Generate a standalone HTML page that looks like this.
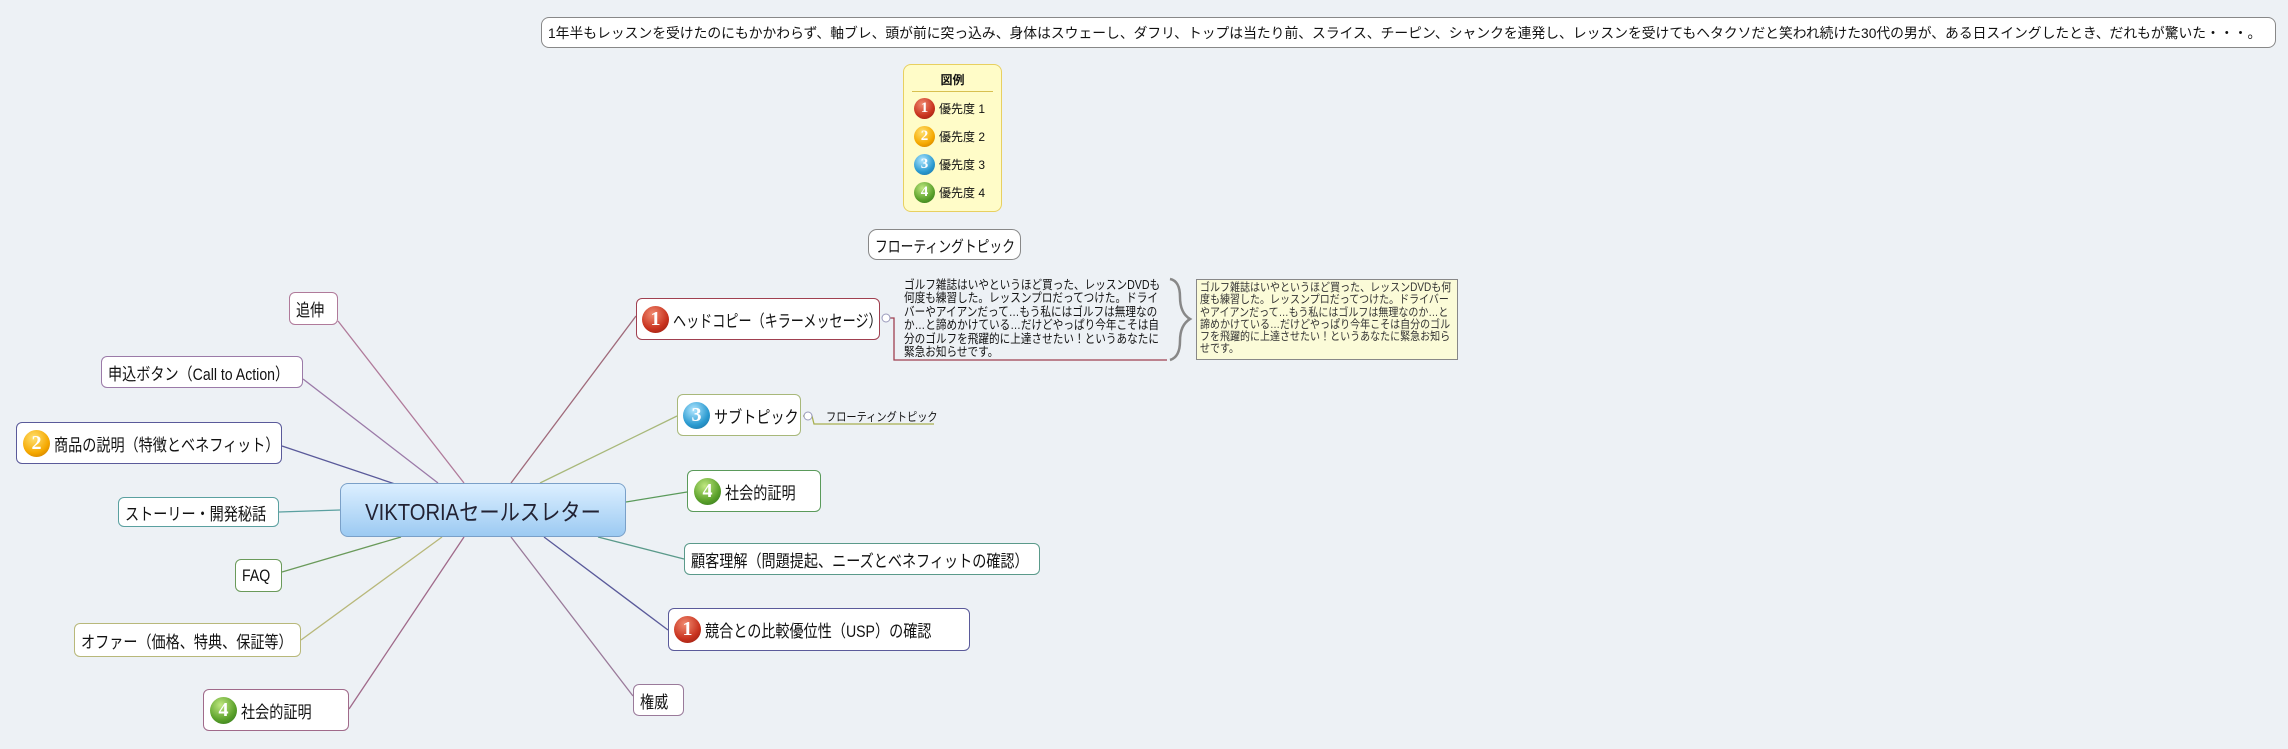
<!DOCTYPE html>
<html><head><meta charset="utf-8"><style>
*{margin:0;padding:0;box-sizing:border-box}
body{width:2288px;height:749px;overflow:hidden;background:#edf1f5;font-family:"Liberation Sans","Noto Sans CJK JP",sans-serif;color:#111;position:relative}
.n{position:absolute;background:#fff;border:1.5px solid #999;border-radius:6px;display:flex;align-items:center;font-size:17px;padding:0 6px;white-space:nowrap}
.t{display:inline-block;transform:scaleX(.83);transform-origin:left center}
.ic{width:27px;height:27px;border-radius:50%;color:#fff;font-weight:bold;font-size:20px;display:flex;align-items:center;justify-content:center;margin-right:4px;flex:none;font-family:"Liberation Serif",serif}
.r{background:radial-gradient(circle at 40% 30%,#f08a70,#c8321e 60%,#8a1a10)}
.o{background:radial-gradient(circle at 40% 30%,#ffe070,#f5a800 60%,#c07000)}
.b{background:radial-gradient(circle at 40% 30%,#b0e6ff,#2a9ad0 60%,#1a6a9a)}
.g{background:radial-gradient(circle at 40% 30%,#c0e880,#5aa02a 60%,#2a701a)}
.lg .ic{width:21px;height:21px;font-size:15px}
</style></head><body>
<svg width="2288" height="749" style="position:absolute;left:0;top:0">
<g stroke-width="1.3" fill="none">
<line x1="338" y1="321" x2="464" y2="483" stroke="#b07a9a"/>
<line x1="303" y1="379" x2="438" y2="483" stroke="#9b7aa8"/>
<line x1="282" y1="446" x2="404" y2="487" stroke="#5a5a9a"/>
<line x1="279" y1="512" x2="340" y2="510" stroke="#5aa0a0"/>
<line x1="282" y1="572" x2="401" y2="537" stroke="#6a9a5a"/>
<line x1="301" y1="640" x2="442" y2="537" stroke="#b8b87a"/>
<line x1="349" y1="709" x2="464" y2="537" stroke="#a06a8a"/>
<line x1="636" y1="316" x2="511" y2="483" stroke="#a06a7a"/>
<line x1="677" y1="416" x2="540" y2="483" stroke="#a8b87a"/>
<line x1="687" y1="492" x2="626" y2="502" stroke="#5a9a5a"/>
<line x1="684" y1="559" x2="598" y2="537" stroke="#5a9a8a"/>
<line x1="668" y1="630" x2="544" y2="537" stroke="#5a5a9a"/>
<line x1="633" y1="696" x2="511" y2="537" stroke="#9a7a9a"/>
<path d="M882 318 L894 318 L894 360 L1167 360" stroke="#a04050"/>
<path d="M803 416 L812 416 L814 424 L934 424" stroke="#a8b050"/>
<path d="M1170 279 q10 2 10 18 t10 22 q-10 6 -10 22 t-10 19" stroke="#888" stroke-width="2.5"/>
</g>
<circle cx="886" cy="318" r="4" fill="#fff" stroke="#99b"/>
<circle cx="808" cy="416" r="4" fill="#fff" stroke="#99b"/>
</svg>

<div class="n" style="left:541px;top:17px;width:1735px;height:31px;font-size:14px;border-color:#888;border-radius:8px"><span class="t" style="transform:scaleX(.985)">1年半もレッスンを受けたのにもかかわらず、軸ブレ、頭が前に突っ込み、身体はスウェーし、ダフリ、トップは当たり前、スライス、チーピン、シャンクを連発し、レッスンを受けてもヘタクソだと笑われ続けた30代の男が、ある日スイングしたとき、だれもが驚いた・・・。</span></div>

<div class="lg" style="position:absolute;left:903px;top:64px;width:99px;height:148px;background:#fffcc8;border:1.5px solid #e8d060;border-radius:8px;font-size:12px">
<div style="text-align:center;font-weight:bold;margin:6px 8px 0;border-bottom:1px solid #d8c050;padding-bottom:3px">図例</div>
<div style="display:flex;align-items:center;margin:6px 0 0 10px"><span class="ic r">1</span>優先度 1</div>
<div style="display:flex;align-items:center;margin:7px 0 0 10px"><span class="ic o">2</span>優先度 2</div>
<div style="display:flex;align-items:center;margin:7px 0 0 10px"><span class="ic b">3</span>優先度 3</div>
<div style="display:flex;align-items:center;margin:7px 0 0 10px"><span class="ic g">4</span>優先度 4</div>
</div>

<div class="n" style="left:868px;top:229px;width:153px;height:31px;font-size:16px;border-radius:9px;border-color:#888"><span class="t" style="transform:scaleX(.8)">フローティングトピック</span></div>

<div class="n" style="left:340px;top:483px;width:286px;height:54px;justify-content:center;font-size:23px;background:linear-gradient(#dcefff,#9ccaf2);border-color:#7aa0c8;border-radius:8px;color:#223"><span class="t" style="transform:scaleX(.88);transform-origin:center">VIKTORIAセールスレター</span></div>

<div class="n" style="left:289px;top:292px;width:49px;height:33px;border-color:#b07a9a"><span class="t">追伸</span></div>
<div class="n" style="left:101px;top:356px;width:202px;height:32px;border-color:#9b7aa8"><span class="t">申込ボタン（Call to Action）</span></div>
<div class="n" style="left:16px;top:422px;width:266px;height:42px;border-color:#5a5a9a;padding-left:6px"><span class="ic o">2</span><span class="t">商品の説明（特徴とベネフィット）</span></div>
<div class="n" style="left:118px;top:497px;width:161px;height:30px;border-color:#5aa0a0"><span class="t">ストーリー・開発秘話</span></div>
<div class="n" style="left:235px;top:559px;width:47px;height:33px;border-color:#6a9a5a"><span class="t">FAQ</span></div>
<div class="n" style="left:74px;top:623px;width:227px;height:34px;border-color:#b8b87a"><span class="t">オファー（価格、特典、保証等）</span></div>
<div class="n" style="left:203px;top:689px;width:146px;height:42px;border-color:#a06a8a"><span class="ic g">4</span><span class="t">社会的証明</span></div>

<div class="n" style="left:636px;top:298px;width:244px;height:42px;border-color:#a04050;padding-left:5px"><span class="ic r">1</span><span class="t" style="transform:scaleX(.77)">ヘッドコピー（キラーメッセージ）</span></div>
<div style="position:absolute;left:904px;top:279px;width:310px;font-size:12.5px;line-height:13.4px;transform:scaleX(.85);transform-origin:left top">ゴルフ雑誌はいやというほど買った、レッスンDVDも何度も練習した。レッスンプロだってつけた。ドライバーやアイアンだって…もう私にはゴルフは無理なのか…と諦めかけている…だけどやっぱり今年こそは自分のゴルフを飛躍的に上達させたい！というあなたに緊急お知らせです。</div>
<div style="position:absolute;left:1196px;top:279px;width:262px;height:81px;background:#fbfbd8;border:1.5px solid #888;"></div>
<div style="position:absolute;left:1200px;top:282px;width:290px;font-size:11.5px;line-height:12.3px;color:#333;transform:scaleX(.87);transform-origin:left top">ゴルフ雑誌はいやというほど買った、レッスンDVDも何度も練習した。レッスンプロだってつけた。ドライバーやアイアンだって…もう私にはゴルフは無理なのか…と諦めかけている…だけどやっぱり今年こそは自分のゴルフを飛躍的に上達させたい！というあなたに緊急お知らせです。</div>

<div class="n" style="left:677px;top:394px;width:124px;height:42px;border-color:#a8b87a;padding-left:5px"><span class="ic b">3</span><span class="t">サブトピック</span></div>
<div style="position:absolute;left:826px;top:408px;font-size:12px;transform:scaleX(.85);transform-origin:left">フローティングトピック</div>
<div class="n" style="left:687px;top:470px;width:134px;height:42px;border-color:#5a9a5a"><span class="ic g">4</span><span class="t">社会的証明</span></div>
<div class="n" style="left:684px;top:543px;width:356px;height:32px;border-color:#5a9a8a"><span class="t">顧客理解（問題提起、ニーズとベネフィットの確認）</span></div>
<div class="n" style="left:668px;top:608px;width:302px;height:43px;border-color:#5a5a9a;padding-left:5px"><span class="ic r">1</span><span class="t">競合との比較優位性（USP）の確認</span></div>
<div class="n" style="left:633px;top:684px;width:51px;height:32px;border-color:#9a7a9a"><span class="t">権威</span></div>
</body></html>
